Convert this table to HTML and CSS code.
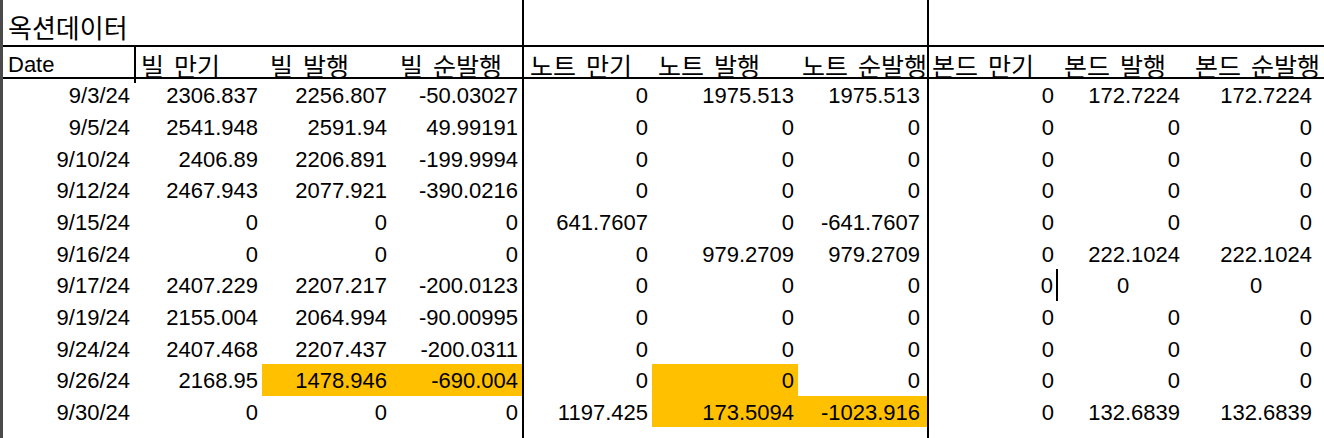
FILE: index.html
```html
<!DOCTYPE html>
<html lang="ko">
<head>
<meta charset="utf-8">
<title>옥션데이터</title>
<link rel="stylesheet" href="styles.css">
</head>
<body>
<div class="sheet">
  <div class="row title-row">
    <div class="c a title">옥션데이터</div><div class="c b"></div><div class="c c3"></div><div class="c d"></div>
    <div class="c e"></div><div class="c f"></div><div class="c g"></div>
    <div class="c h"></div><div class="c i"></div><div class="c j"></div>
  </div>
  <div class="row head-row">
    <div class="c a hd date">Date</div><div class="c b hd sep">빌 만기</div><div class="c c3 hd">빌 발행</div><div class="c d hd">빌 순발행</div>
    <div class="c e hd">노트 만기</div><div class="c f hd">노트 발행</div><div class="c g hd">노트 순발행</div>
    <div class="c h hd">본드 만기</div><div class="c i hd">본드 발행</div><div class="c j hd">본드 순발행</div>
  </div>
  <div class="row data">
    <div class="c a">9/3/24</div><div class="c b">2306.837</div><div class="c c3">2256.807</div><div class="c d">-50.03027</div>
    <div class="c e">0</div><div class="c f">1975.513</div><div class="c g">1975.513</div>
    <div class="c h">0</div><div class="c i">172.7224</div><div class="c j">172.7224</div>
  </div>
  <div class="row data">
    <div class="c a">9/5/24</div><div class="c b">2541.948</div><div class="c c3">2591.94</div><div class="c d">49.99191</div>
    <div class="c e">0</div><div class="c f">0</div><div class="c g">0</div>
    <div class="c h">0</div><div class="c i">0</div><div class="c j">0</div>
  </div>
  <div class="row data">
    <div class="c a">9/10/24</div><div class="c b">2406.89</div><div class="c c3">2206.891</div><div class="c d">-199.9994</div>
    <div class="c e">0</div><div class="c f">0</div><div class="c g">0</div>
    <div class="c h">0</div><div class="c i">0</div><div class="c j">0</div>
  </div>
  <div class="row data">
    <div class="c a">9/12/24</div><div class="c b">2467.943</div><div class="c c3">2077.921</div><div class="c d">-390.0216</div>
    <div class="c e">0</div><div class="c f">0</div><div class="c g">0</div>
    <div class="c h">0</div><div class="c i">0</div><div class="c j">0</div>
  </div>
  <div class="row data">
    <div class="c a">9/15/24</div><div class="c b">0</div><div class="c c3">0</div><div class="c d">0</div>
    <div class="c e">641.7607</div><div class="c f">0</div><div class="c g">-641.7607</div>
    <div class="c h">0</div><div class="c i">0</div><div class="c j">0</div>
  </div>
  <div class="row data">
    <div class="c a">9/16/24</div><div class="c b">0</div><div class="c c3">0</div><div class="c d">0</div>
    <div class="c e">0</div><div class="c f">979.2709</div><div class="c g">979.2709</div>
    <div class="c h">0</div><div class="c i">222.1024</div><div class="c j">222.1024</div>
  </div>
  <div class="row data">
    <div class="c a">9/17/24</div><div class="c b">2407.229</div><div class="c c3">2207.217</div><div class="c d">-200.0123</div>
    <div class="c e">0</div><div class="c f">0</div><div class="c g">0</div>
    <div class="c h bar">0</div><div class="c i mid">0</div><div class="c j mid">0</div>
  </div>
  <div class="row data">
    <div class="c a">9/19/24</div><div class="c b">2155.004</div><div class="c c3">2064.994</div><div class="c d">-90.00995</div>
    <div class="c e">0</div><div class="c f">0</div><div class="c g">0</div>
    <div class="c h">0</div><div class="c i">0</div><div class="c j">0</div>
  </div>
  <div class="row data">
    <div class="c a">9/24/24</div><div class="c b">2407.468</div><div class="c c3">2207.437</div><div class="c d">-200.0311</div>
    <div class="c e">0</div><div class="c f">0</div><div class="c g">0</div>
    <div class="c h">0</div><div class="c i">0</div><div class="c j">0</div>
  </div>
  <div class="row data">
    <div class="c a">9/26/24</div><div class="c b">2168.95</div><div class="c c3 hl">1478.946</div><div class="c d hl">-690.004</div>
    <div class="c e">0</div><div class="c f hl">0</div><div class="c g">0</div>
    <div class="c h">0</div><div class="c i">0</div><div class="c j">0</div>
  </div>
  <div class="row data">
    <div class="c a">9/30/24</div><div class="c b">0</div><div class="c c3">0</div><div class="c d">0</div>
    <div class="c e">1197.425</div><div class="c f hl">173.5094</div><div class="c g hl">-1023.916</div>
    <div class="c h">0</div><div class="c i">132.6839</div><div class="c j">132.6839</div>
  </div>
  <div class="row data tail">
    <div class="c a"></div><div class="c b"></div><div class="c c3"></div><div class="c d"></div>
    <div class="c e"></div><div class="c f"></div><div class="c g"></div>
    <div class="c h"></div><div class="c i"></div><div class="c j"></div>
  </div>
</div>
</body>
</html>
```

FILE: styles.css
```css
html, body {
  margin: 0;
  padding: 0;
  background: #ffffff;
}

body {
  width: 1324px;
  height: 438px;
  overflow: hidden;
  font-family: "Liberation Sans", Arial, "Noto Sans CJK KR", sans-serif;
  color: #000;
}

.sheet {
  border-left: 3px solid #4a4a4a;
  height: 438px;
  box-sizing: border-box;
}

.row {
  display: grid;
  grid-template-columns: 131px 128px 129px 131px 130px 146px 129px 131px 130px 1fr;
}

.c {
  box-sizing: border-box;
  font-size: 22px;
  white-space: nowrap;
  display: flex;
  align-items: center;
  justify-content: flex-end;
  padding-right: 4px;
  min-width: 0;
}

.e, .h {
  border-left: 2px solid #000;
}

.g {
  padding-right: 7px;
}

.i {
  padding-right: 8px;
}

.j {
  padding-right: 12px;
}

.title-row {
  height: 47px;
  border-bottom: 2px solid #000;
  box-sizing: border-box;
}

.title {
  justify-content: flex-start;
  align-items: flex-end;
  padding: 0 0 0 5px;
  overflow: visible;
  font-family: "Noto Sans CJK KR", sans-serif;
  font-size: 26px;
}

.head-row {
  height: 32px;
  border-bottom: 2px solid #000;
  box-sizing: border-box;
}

.hd {
  justify-content: flex-start;
  padding: 0 0 0 6px;
  font-family: "Noto Sans CJK KR", sans-serif;
  font-size: 25px;
  word-spacing: 3px;
  overflow: visible;
}

.date {
  font-family: "Liberation Sans", Arial, sans-serif;
  font-size: 22px;
  padding-left: 5px;
}

.sep {
  border-left: 2px solid #000;
  padding-left: 5px;
}

.d.hd { padding-left: 9px; }
.c3.hd { padding-left: 8px; }
.h.hd { padding-left: 3px; }
.g.hd { padding-left: 4px; }
.j.hd { padding-left: 7px; }

.data {
  height: 31.67px;
}

.data .c {
  padding-top: 3px;
}

.tail {
  height: 12px;
}

.hl {
  background: #ffc000;
}

.bar {
  border-right: 2px solid #000;
  padding-right: 3px;
}

.mid {
  justify-content: center;
  padding-right: 0;
}
```
